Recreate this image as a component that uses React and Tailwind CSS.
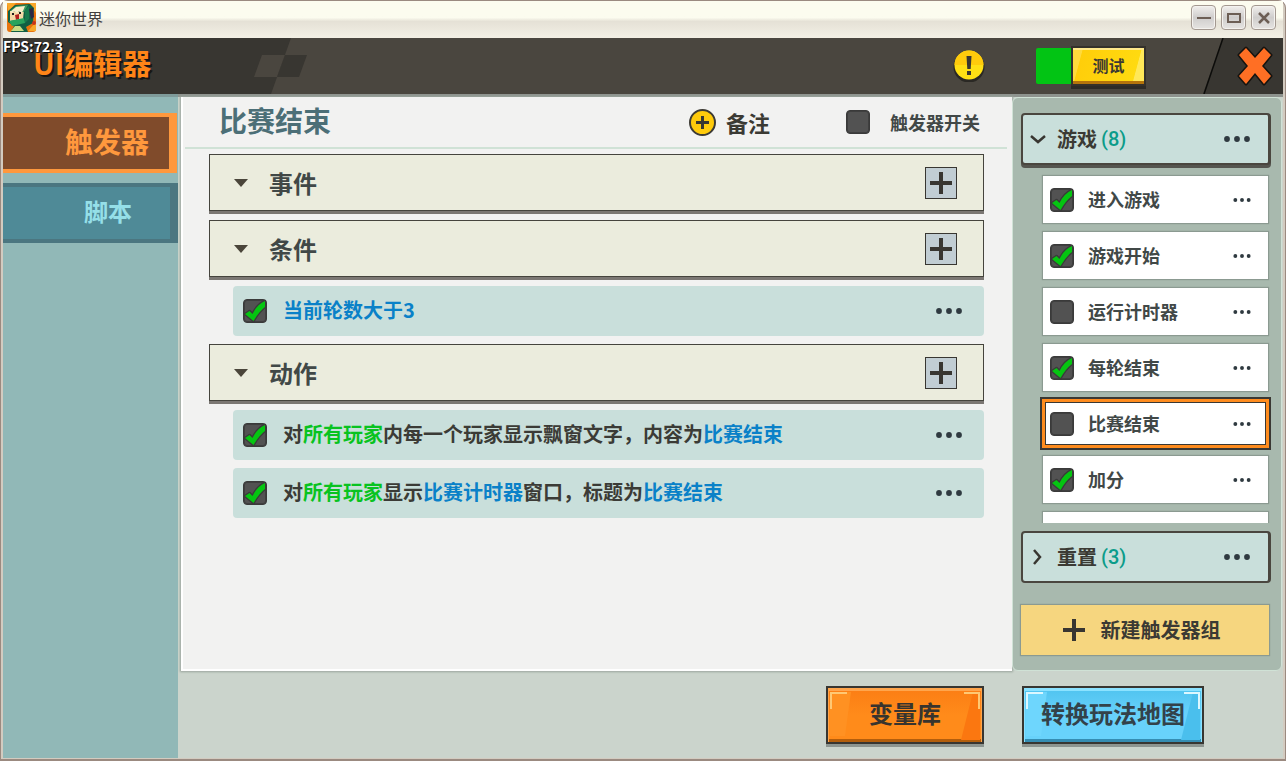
import { useState } from "react";

const initialItems = [
  { name: "进入游戏", on: true },
  { name: "游戏开始", on: true },
  { name: "运行计时器", on: false },
  { name: "每轮结束", on: true },
  { name: "比赛结束", on: false },
  { name: "加分", on: true },
  { name: "", on: null },
];

function Dots({ small }) {
  return (
    <svg
      className={small ? "h-1 w-[18px]" : "h-1.5 w-[26px]"}
      viewBox="0 0 26 6"
      fill="#2f3a40"
      aria-hidden="true"
    >
      <circle cx="3" cy="3" r="2.9" />
      <circle cx="13" cy="3" r="2.9" />
      <circle cx="23" cy="3" r="2.9" />
    </svg>
  );
}

function Check({ label, defaultChecked }) {
  return (
    <span className="relative block size-6 shrink-0">
      <input
        type="checkbox"
        aria-label={label}
        defaultChecked={defaultChecked}
        className="peer block size-6 appearance-none rounded border border-[#3a3a3a] bg-[#525252] shadow-[inset_0_0_0_1px_#3f3f3f]"
      />
      <svg
        className="pointer-events-none absolute inset-0 hidden size-6 peer-checked:block"
        viewBox="0 0 24 24"
        aria-hidden="true"
      >
        <path
          d="M2 15 6.500 12 9.500 15Q14 5.500 22 2V8Q16 12.500 10.500 22z"
          fill="#05c511"
          stroke="#3a3a3a"
          strokeWidth="2.500"
          strokeLinejoin="round"
          paintOrder="stroke"
        />
      </svg>
    </span>
  );
}

function Plus() {
  return (
    <svg className="size-[22px]" viewBox="0 0 22 22" fill="#383631" aria-hidden="true">
      <path d="M9 0h4v9h9v4h-9v9H9v-9H0V9h9z" />
    </svg>
  );
}

// slanted facets and bright corners on the big buttons
function Gloss({ dark, light, corner }) {
  return (
    <>
      <svg className="absolute top-1 bottom-1 left-0.5 h-[44px] w-6" viewBox="0 0 24 44" aria-hidden="true">
        <path d="M0 0h21l-6 44H0z" fill={light} />
        <path d="M1 17V1h16" fill="none" stroke={corner} strokeWidth="2" />
      </svg>
      <svg className="absolute top-1 right-0.5 h-[48px] w-7" viewBox="0 0 28 48" aria-hidden="true">
        <path d="M21 0h7v48H9z" fill={dark} />
        <path d="M12 1h15v16" fill="none" stroke={corner} strokeWidth="2" />
      </svg>
    </>
  );
}

function Section({ title, children }) {
  return (
    <section>
      <div className="mb-[9px] flex h-[57px] items-center border border-[#45443d] bg-[#ebecdd] pr-[26px] pl-6 shadow-[0_3px_0_#7b7773]">
        <svg className="h-2 w-3.5" viewBox="0 0 14 8" fill="#4a453a" aria-hidden="true">
          <path d="M0 0h14L7 8z" />
        </svg>
        <h2 className="ml-[21px] flex-1 text-2xl leading-8 font-bold text-[#414847]">{title}</h2>
        <button
          aria-label={"添加" + title}
          className="flex size-8 items-center justify-center border border-[#383631] bg-[#c1cdd3]"
        >
          <Plus />
        </button>
      </div>
      {children}
    </section>
  );
}

function Row({ label, children }) {
  return (
    <div className="mb-2 ml-6 flex h-[50px] items-center rounded-sm bg-[#c9dfdb] pr-[22px] pl-2.5">
      <Check label={label} defaultChecked />
      <p className="ml-4 flex-1 pb-0.5 text-xl leading-7 font-bold text-[#3b3b36]">{children}</p>
      <button aria-label="更多" className="flex">
        <Dots />
      </button>
    </div>
  );
}

const Blue = ({ children }) => <span className="text-[#0a81c8]">{children}</span>;
const Green = ({ children }) => <span className="text-[#08c320]">{children}</span>;

function Logo() {
  return (
    <svg className="size-[29px]" viewBox="0 0 29 29" aria-hidden="true">
      <rect width="29" height="29" rx="3" fill="#e8730c" />
      <path d="M0 0h9L1 9zM22 0h7v10zM29 19v9h-8z" fill="#f8a82a" />
      <path d="M1 8 8 2l15-1 4 4-1 15-7 4 2 5H4l3-6-6-4z" fill="#115f43" />
      <path d="m3 8 14-1-1 9-13 2z" fill="#f4d9a6" />
      <path d="m3 8 6-5 12-1-4 7z" fill="#3b9a5f" />
      <path d="m3 9 6-5 9-1-2 5-2 2-2-2-2 2-3-2-2 2z" fill="#f6efcb" />
      <path d="M5 10h2v2H5zM12 9h2v2h-2z" fill="#222" />
      <path d="m8 12 4-1v5l-3 1z" fill="#b3211f" />
      <path d="m2 18 15-3 1 5-13 3z" fill="#29a35d" />
      <path d="m18 7 4-4v13l-4 4z" fill="#177a4d" />
      <path d="m4 28 4-5h5l4 5z" fill="#c9dc83" />
      <path d="m22 6 4-1 1 9-3 2z" fill="#2a2944" />
      <circle cx="27" cy="20" r="2" fill="#c8331b" />
    </svg>
  );
}

function WindowButton({ label, children }) {
  return (
    <button
      aria-label={label}
      className="flex size-[25px] items-center justify-center rounded border border-[#a39890] bg-linear-to-b from-[#f1efed] via-[#cfcdcc] to-[#e6e4e2] shadow-[inset_0_0_0_1px_#f4f2ef]"
    >
      <svg className="size-4 shrink-0" viewBox="0 0 16 16" fill="none" stroke="#6c5e55" strokeWidth="2" aria-hidden="true">
        {children}
      </svg>
    </button>
  );
}

function TitleBar() {
  return (
    <div className="flex h-[37px] shrink-0 items-center bg-linear-to-b from-[#fcfcef] from-45% via-[#e5e1d6] via-55% to-[#f3f0e5] pr-[7px] pb-1 pl-1">
      <Logo />
      <span className="ml-[3px] flex-1 text-base leading-6 text-[#42403d]">迷你世界</span>
      <div className="flex gap-[5px]">
        <WindowButton label="最小化">
          <path d="M1 8h14" />
        </WindowButton>
        <WindowButton label="最大化">
          <path d="M2 4h12v8H2z" />
        </WindowButton>
        <WindowButton label="关闭窗口">
          <path d="m3 3 10 10M13 3 3 13" strokeWidth="2.500" />
        </WindowButton>
      </div>
    </div>
  );
}

function Header() {
  return (
    <header className="relative flex h-14 shrink-0 items-center bg-[#4a463f] pr-[9px]">
      <svg className="absolute top-0 left-0 h-14 w-[310px]" viewBox="0 0 310 56" aria-hidden="true">
        <path d="M0 0h288l-20 56H0z" fill="#383631" />
        <path d="M259 17h23l-8 22h-23z" fill="#4a463f" />
        <path d="M282 17h22l-8 22h-22z" fill="#383631" />
      </svg>
      <svg className="absolute top-0 right-0 h-14 w-20" viewBox="0 0 80 56" aria-hidden="true">
        <path d="M20 0h60v56H0z" fill="#383631" />
        <path d="M20 0 1 56" stroke="#0c0c0a" strokeWidth="1.500" />
      </svg>
      <h1 className="relative ml-[30px] flex-1 pb-2 text-[29px] leading-9 font-bold text-[#ff8518] [text-shadow:2px_2px_0_#171614]">
        UI编辑器
      </h1>
      <span className="absolute top-0 left-0 text-sm leading-4 font-bold text-white [text-shadow:1px_1px_0_#000]">
        FPS:72.3
      </span>
      <button aria-label="提示" className="relative mr-[51px]">
        <svg className="size-8" viewBox="0 0 32 32" aria-hidden="true">
          <circle cx="16" cy="17" r="15.500" fill="#2a2824" />
          <circle cx="16" cy="15" r="14.500" fill="#ffe014" />
          <path d="M1.500 15a14.500 14.500 0 0 1 29 0z" fill="#ffcb0c" />
          <path d="M13.500 6h5l-.8 13h-3.400zM14 21h4v4h-4z" fill="#383631" />
        </svg>
      </button>
      <div className="relative flex items-center">
        <span className="h-9 w-[35px] rounded-l-xs bg-[#02c414]" />
        <button className="relative h-10 w-[75px] border-2 border-[#34312b] bg-[linear-gradient(105deg,#ffda3c_12%,#ffce0a_13%,#ffda10_85%,#ffe858_86%)] pb-0.5 text-base leading-6 font-bold text-[#3c3933] shadow-[inset_0_2px_0_#ffe88a,inset_0_-3px_0_#b5740b,0_3px_0_#2d2b27]">
          测试
        </button>
      </div>
      <button aria-label="关闭" className="relative ml-[90px]">
        <svg className="h-[42px] w-[38px]" viewBox="0 0 38 42" aria-hidden="true">
          <path
            d="m3 10 7-7 9 10 9-10 7 7-9 11 9 10-7 8-9-11-9 11-7-8 9-10z"
            fill="#ff6f24"
            stroke="#15130f"
            strokeWidth="3"
            strokeLinejoin="round"
            paintOrder="stroke"
          />
        </svg>
      </button>
    </header>
  );
}

function Sidebar() {
  return (
    <nav className="flex w-[175px] shrink-0 flex-col gap-2.5 border-t-[3px] border-[#7f9b9a] bg-[#91b8b7] pt-4">
      <button className="mr-px h-[60px] border-y-4 border-r-8 border-[#ff983d] bg-[#804b2b] pr-5 pb-1 text-right text-[28px] leading-9 font-bold text-[#ff983d]">
        触发器
      </button>
      <button className="h-[60px] border-y-4 border-r-8 border-[#4b7680] bg-[#4f8a97] pr-[38px] pb-1 text-right text-2xl leading-8 font-bold text-[#95dfe8]">
        脚本
      </button>
    </nav>
  );
}

function TriggerPanel() {
  return (
    <main className="flex min-w-0 flex-1 flex-col border-b-2 border-l-2 border-white bg-[#f2f2f1] shadow-[0_0_2px_1px_#9aa59d]">
      <div className="mr-[5px] ml-0.5 flex h-[52px] items-center border-b-2 border-[#d0e2d6] pr-[27px] pl-[34px]">
        <h2 className="flex-1 pb-1 text-[28px] leading-9 font-bold text-[#4c6f77]">比赛结束</h2>
        <button className="flex items-center gap-2.5 text-[22px] leading-8 font-bold text-[#3b3a34]">
          <svg className="size-[27px]" viewBox="0 0 27 27" aria-hidden="true">
            <circle cx="13.500" cy="13.500" r="12.500" fill="#ffcb0c" stroke="#3d3b35" strokeWidth="2" />
            <path d="M13.500 7v13M7 13.500h13" stroke="#383631" strokeWidth="3" />
          </svg>
          备注
        </button>
        <label className="ml-[76px] flex items-center gap-5 text-lg leading-7 font-bold text-[#414847]">
          <Check label="触发器开关" />
          触发器开关
        </label>
      </div>
      <div className="min-h-0 flex-1 overflow-hidden pt-[5px] pr-7 pl-[26px]">
        <Section title="事件" />
        <Section title="条件">
          <Row label="当前轮数大于3">
            <Blue>当前轮数大于3</Blue>
          </Row>
        </Section>
        <Section title="动作">
          <Row label="显示飘窗文字">
            对<Green>所有玩家</Green>内每一个玩家显示飘窗文字，内容为<Blue>比赛结束</Blue>
          </Row>
          <Row label="显示计时器窗口">
            对<Green>所有玩家</Green>显示<Blue>比赛计时器</Blue>窗口，标题为<Blue>比赛结束</Blue>
          </Row>
        </Section>
      </div>
    </main>
  );
}

function GroupHeader({ name, count, open }) {
  return (
    <div className="mr-2.5 ml-2 flex h-[52px] shrink-0 items-center rounded border-2 border-r-[3px] border-[#4a463f] bg-[#c9dfdb] pr-[18px] pl-[7px]">
      <button className="flex flex-1 items-center text-left text-xl leading-7 font-bold text-[#3b3a34]">
        <svg className="mr-[11px] size-4" viewBox="0 0 16 16" fill="none" stroke="#383631" strokeWidth="2.500" aria-hidden="true">
          {open ? <path d="m1 5 7 6 7-6" /> : <path d="m4 1 6 7-6 7" />}
        </svg>
        {name}
        <span className="ml-1 font-['Roboto',sans-serif] font-medium text-[#0b9c8a]">({count})</span>
      </button>
      <button aria-label="更多" className="flex">
        <Dots />
      </button>
    </div>
  );
}

function GroupPanel() {
  const [selected, setSelected] = useState(4);

  return (
    <aside className="mr-px flex w-[270px] shrink-0 flex-col rounded-md border border-[#d0e2d6] bg-[#a8b9ae] py-[15px]">
      <div className="rounded [&>div]:shadow-[0_3px_0_#55554f]">
        <GroupHeader name="游戏" count={8} open />
      </div>
      <ul className="min-h-0 flex-1 basis-0 space-y-[9px] overflow-hidden pt-[11px] pr-[13px] pl-[30px]">
        {initialItems.map((item, i) => (
          <li
            key={i}
            className={
              "flex h-[47px] items-center bg-white pr-[17px] pl-[7px] " +
              (i === selected
                ? "shadow-[0_0_0_1px_#ff8c1e,0_0_0_3px_#3a3833,inset_0_0_0_2px_#ff8c1e,inset_0_0_0_3px_#3a3833]"
                : "shadow-[0_0_1px_1px_#8b9a91]")
            }
          >
            {item.name && (
              <>
                <Check label={item.name} defaultChecked={item.on} />
                <button
                  onClick={() => setSelected(i)}
                  className="ml-3.5 flex-1 pb-0.5 text-left text-lg leading-7 font-bold text-[#414847]"
                >
                  {item.name}
                </button>
                <button aria-label="更多" className="flex">
                  <Dots small />
                </button>
              </>
            )}
          </li>
        ))}
      </ul>
      <div className="mt-2 mb-[22px]">
        <GroupHeader name="重置" count={3} />
      </div>
      <button className="mr-3 ml-2 flex h-[50px] shrink-0 items-center justify-center gap-4 bg-[#f6d67f] pr-[7px] text-xl leading-7 font-bold text-[#3b3a34] shadow-[0_0_1px_1px_#8b9a91]">
        <Plus />
        新建触发器组
      </button>
    </aside>
  );
}

function Footer() {
  return (
    <footer className="flex h-[87px] shrink-0 items-start justify-end gap-[38px] pt-[15px] pr-[79px]">
      <button className="relative h-[58px] w-[158px] border-2 border-[#383631] bg-linear-to-b from-[#fb7d14] to-[#ff8b1a] to-50% pb-1 text-2xl leading-8 font-bold text-[#38342e] shadow-[inset_0_2px_0_1px_#ffa54c,inset_0_-3px_0_#b35e0c,0_3px_0_#8d9590]">
        <Gloss dark="#fb7710" light="#ff9122" corner="#ffc873" />
        <span className="relative">变量库</span>
      </button>
      <button className="relative h-[58px] w-[182px] border-2 border-[#383631] bg-linear-to-b from-[#4fc3ef] to-[#68d2fb] to-50% pb-1 text-2xl leading-8 font-bold text-[#33424a] shadow-[inset_0_2px_0_1px_#8be2ff,inset_0_-3px_0_#358db2,0_3px_0_#8d9590]">
        <Gloss dark="#4abfed" light="#6ed6fd" corner="#dcf7ff" />
        <span className="relative">转换玩法地图</span>
      </button>
    </footer>
  );
}

export default function App() {
  return (
    <div className="flex h-screen flex-col rounded-t-lg border-x border-t border-b-2 border-[#9b8a80] bg-[#d3cbc0] px-0.5 pb-px font-['Noto_Sans_CJK_SC','Noto_Sans_CJK_TC',sans-serif]">
      <TitleBar />
      <Header />
      <div className="flex min-h-0 flex-1">
        <Sidebar />
        <div className="flex min-w-0 flex-1 flex-col border-t-[3px] border-[#8e938e] bg-[#cbd4cc]">
          <div className="flex min-h-0 flex-1 pl-[3px]">
            <TriggerPanel />
            <GroupPanel />
          </div>
          <Footer />
        </div>
      </div>
    </div>
  );
}
